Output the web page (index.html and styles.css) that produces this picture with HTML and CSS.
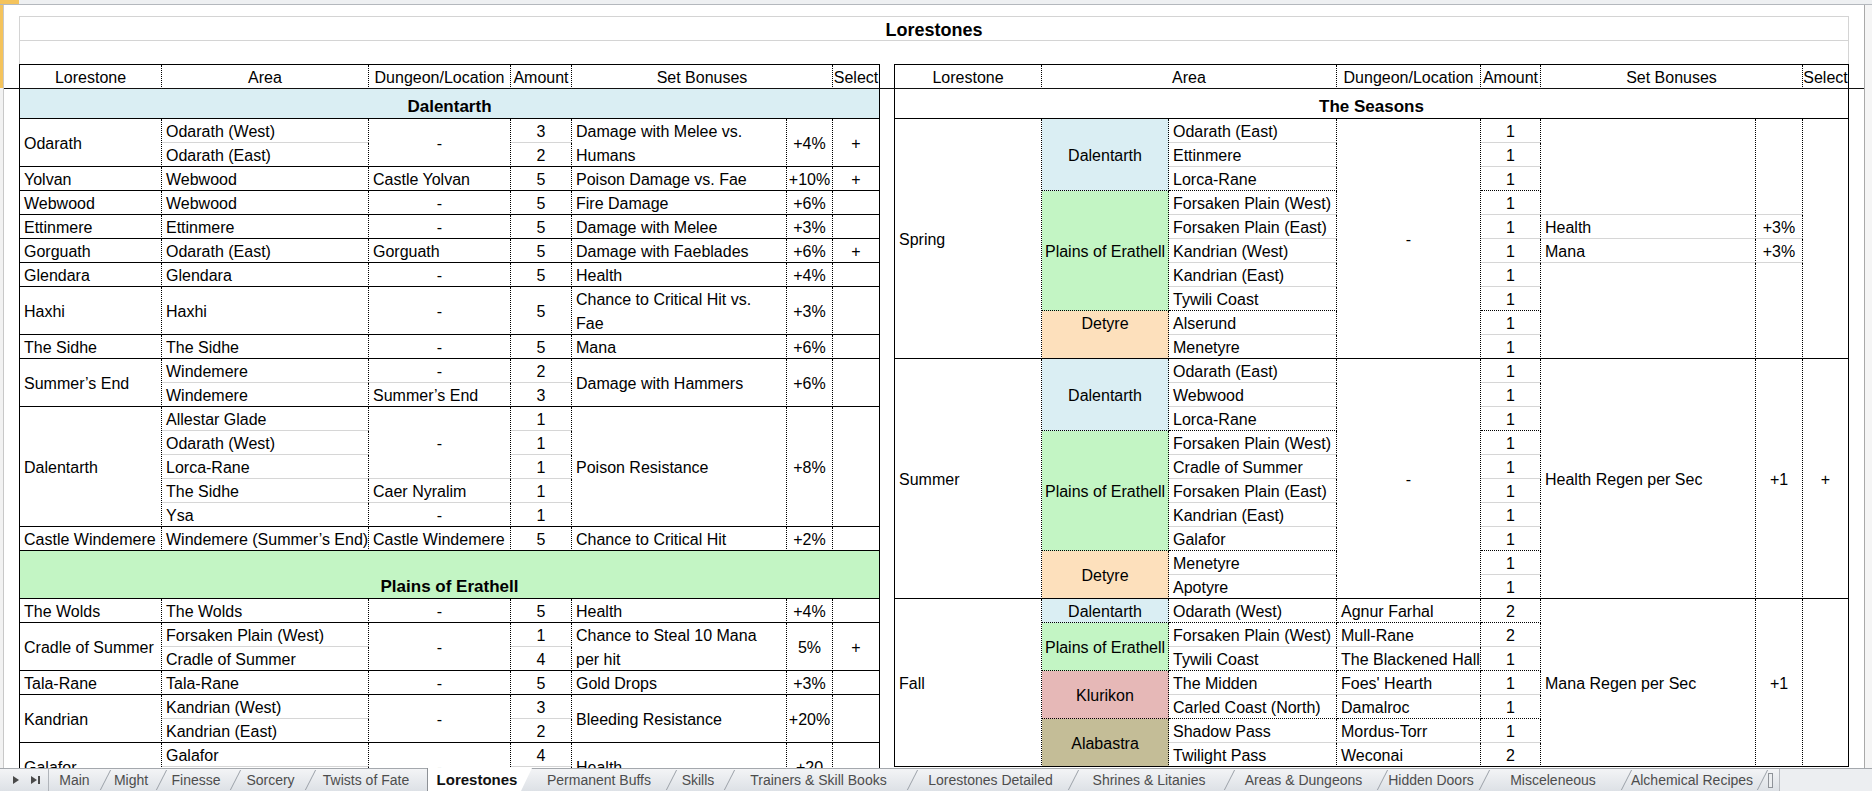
FILE: index.html
```html
<!DOCTYPE html>
<html lang="en">
<head>
<meta charset="utf-8">
<title>Lorestones</title>
<link rel="stylesheet" href="styles.css">
</head>
<body>
<div class="app">
  <div class="colhead"><div class="sel"></div></div>
  <div class="main">
    <div class="gutter"><div class="sel"></div></div>
    <div class="sheet">
      <div class="freeze"></div>
      <div class="titleblock">
        <div class="title">Lorestones</div>
        <div class="blank"></div>
      </div>
      <div class="tables">
        <!-- LEFT TABLE -->
        <div class="tbl tl">
          <div class="grid head">
            <div class="c ctr">Lorestone</div>
            <div class="c ctr">Area</div>
            <div class="c ctr">Dungeon/Location</div>
            <div class="c ctr">Amount</div>
            <div class="c ctr s2">Set Bonuses</div>
            <div class="c ctr e">Select</div>
          </div>
          <div class="sec blue">Dalentarth</div>
          <div class="grid">
            <div class="c r2">Odarath</div>
            <div class="c bg">Odarath (West)</div>
            <div class="c r2 ctr">-</div>
            <div class="c bg ctr">3</div>
            <div class="c r2 wrap"><span>Damage with Melee vs.<br>Humans</span></div>
            <div class="c r2 ctr">+4%</div>
            <div class="c r2 ctr e">+</div>
            <div class="c">Odarath (East)</div>
            <div class="c ctr">2</div>

            <div class="c">Yolvan</div>
            <div class="c">Webwood</div>
            <div class="c">Castle Yolvan</div>
            <div class="c ctr">5</div>
            <div class="c">Poison Damage vs. Fae</div>
            <div class="c ctr">+10%</div>
            <div class="c ctr e">+</div>

            <div class="c">Webwood</div>
            <div class="c">Webwood</div>
            <div class="c ctr">-</div>
            <div class="c ctr">5</div>
            <div class="c">Fire Damage</div>
            <div class="c ctr">+6%</div>
            <div class="c e"></div>

            <div class="c">Ettinmere</div>
            <div class="c">Ettinmere</div>
            <div class="c ctr">-</div>
            <div class="c ctr">5</div>
            <div class="c">Damage with Melee</div>
            <div class="c ctr">+3%</div>
            <div class="c e"></div>

            <div class="c">Gorguath</div>
            <div class="c">Odarath (East)</div>
            <div class="c">Gorguath</div>
            <div class="c ctr">5</div>
            <div class="c">Damage with Faeblades</div>
            <div class="c ctr">+6%</div>
            <div class="c ctr e">+</div>

            <div class="c">Glendara</div>
            <div class="c">Glendara</div>
            <div class="c ctr">-</div>
            <div class="c ctr">5</div>
            <div class="c">Health</div>
            <div class="c ctr">+4%</div>
            <div class="c e"></div>

            <div class="c r2">Haxhi</div>
            <div class="c r2">Haxhi</div>
            <div class="c r2 ctr">-</div>
            <div class="c r2 ctr">5</div>
            <div class="c r2 wrap"><span>Chance to Critical Hit vs.<br>Fae</span></div>
            <div class="c r2 ctr">+3%</div>
            <div class="c r2 e"></div>

            <div class="c">The Sidhe</div>
            <div class="c">The Sidhe</div>
            <div class="c ctr">-</div>
            <div class="c ctr">5</div>
            <div class="c">Mana</div>
            <div class="c ctr">+6%</div>
            <div class="c e"></div>

            <div class="c r2">Summer’s End</div>
            <div class="c bg">Windemere</div>
            <div class="c bg ctr">-</div>
            <div class="c bg ctr">2</div>
            <div class="c r2">Damage with Hammers</div>
            <div class="c r2 ctr">+6%</div>
            <div class="c r2 e"></div>
            <div class="c">Windemere</div>
            <div class="c">Summer’s End</div>
            <div class="c ctr">3</div>

            <div class="c r5">Dalentarth</div>
            <div class="c bg">Allestar Glade</div>
            <div class="c r3 bg ctr">-</div>
            <div class="c bg ctr">1</div>
            <div class="c r5">Poison Resistance</div>
            <div class="c r5 ctr">+8%</div>
            <div class="c r5 e"></div>
            <div class="c bg">Odarath (West)</div>
            <div class="c bg ctr">1</div>
            <div class="c bg">Lorca-Rane</div>
            <div class="c bg ctr">1</div>
            <div class="c bg">The Sidhe</div>
            <div class="c bg">Caer Nyralim</div>
            <div class="c bg ctr">1</div>
            <div class="c">Ysa</div>
            <div class="c ctr">-</div>
            <div class="c ctr">1</div>

            <div class="c">Castle Windemere</div>
            <div class="c">Windemere (Summer’s End)</div>
            <div class="c">Castle Windemere</div>
            <div class="c ctr">5</div>
            <div class="c">Chance to Critical Hit</div>
            <div class="c ctr">+2%</div>
            <div class="c e"></div>
          </div>
          <div class="sec green tall">Plains of Erathell</div>
          <div class="grid">
            <div class="c">The Wolds</div>
            <div class="c">The Wolds</div>
            <div class="c ctr">-</div>
            <div class="c ctr">5</div>
            <div class="c">Health</div>
            <div class="c ctr">+4%</div>
            <div class="c e"></div>

            <div class="c r2">Cradle of Summer</div>
            <div class="c bg">Forsaken Plain (West)</div>
            <div class="c r2 ctr">-</div>
            <div class="c bg ctr">1</div>
            <div class="c r2 wrap"><span>Chance to Steal 10 Mana<br>per hit</span></div>
            <div class="c r2 ctr">5%</div>
            <div class="c r2 ctr e">+</div>
            <div class="c">Cradle of Summer</div>
            <div class="c ctr">4</div>

            <div class="c">Tala-Rane</div>
            <div class="c">Tala-Rane</div>
            <div class="c ctr">-</div>
            <div class="c ctr">5</div>
            <div class="c">Gold Drops</div>
            <div class="c ctr">+3%</div>
            <div class="c e"></div>

            <div class="c r2">Kandrian</div>
            <div class="c bg">Kandrian (West)</div>
            <div class="c r2 ctr">-</div>
            <div class="c bg ctr">3</div>
            <div class="c r2">Bleeding Resistance</div>
            <div class="c r2 ctr">+20%</div>
            <div class="c r2 e"></div>
            <div class="c">Kandrian (East)</div>
            <div class="c ctr">2</div>

            <div class="c r2">Galafor</div>
            <div class="c bg">Galafor</div>
            <div class="c r2 ctr">-</div>
            <div class="c bg ctr">4</div>
            <div class="c r2">Health</div>
            <div class="c r2 ctr">+20</div>
            <div class="c r2 e"></div>
            <div class="c"></div>
            <div class="c"></div>
          </div>
        </div>

        <!-- RIGHT TABLE -->
        <div class="tbl tr">
          <div class="grid head">
            <div class="c ctr">Lorestone</div>
            <div class="c ctr s2">Area</div>
            <div class="c ctr">Dungeon/Location</div>
            <div class="c ctr">Amount</div>
            <div class="c ctr s2">Set Bonuses</div>
            <div class="c ctr e">Select</div>
          </div>
          <div class="sec">The Seasons</div>
          <div class="grid">
            <!-- Spring -->
            <div class="c r10">Spring</div>
            <div class="c r3 bd blue ctr">Dalentarth</div>
            <div class="c bg">Odarath (East)</div>
            <div class="c r10 ctr">-</div>
            <div class="c bg ctr">1</div>
            <div class="c r4 bg"></div>
            <div class="c r4 bg"></div>
            <div class="c r10 e"></div>
            <div class="c bg">Ettinmere</div>
            <div class="c bg ctr">1</div>
            <div class="c bd">Lorca-Rane</div>
            <div class="c bd ctr">1</div>
            <div class="c r5 bd green ctr">Plains of Erathell</div>
            <div class="c bg">Forsaken Plain (West)</div>
            <div class="c bg ctr">1</div>
            <div class="c bg">Forsaken Plain (East)</div>
            <div class="c bg ctr">1</div>
            <div class="c bg">Health</div>
            <div class="c bg ctr">+3%</div>
            <div class="c bg">Kandrian (West)</div>
            <div class="c bg ctr">1</div>
            <div class="c bg">Mana</div>
            <div class="c bg ctr">+3%</div>
            <div class="c bg">Kandrian (East)</div>
            <div class="c bg ctr">1</div>
            <div class="c r4"></div>
            <div class="c r4"></div>
            <div class="c bd">Tywili Coast</div>
            <div class="c bd ctr">1</div>
            <div class="c r2 peach ctr top">Detyre</div>
            <div class="c bg">Alserund</div>
            <div class="c bg ctr">1</div>
            <div class="c">Menetyre</div>
            <div class="c ctr">1</div>

            <!-- Summer -->
            <div class="c r10">Summer</div>
            <div class="c r3 bd blue ctr">Dalentarth</div>
            <div class="c bg">Odarath (East)</div>
            <div class="c r10 ctr">-</div>
            <div class="c bg ctr">1</div>
            <div class="c r10">Health Regen per Sec</div>
            <div class="c r10 ctr">+1</div>
            <div class="c r10 ctr e">+</div>
            <div class="c bg">Webwood</div>
            <div class="c bg ctr">1</div>
            <div class="c bd">Lorca-Rane</div>
            <div class="c bd ctr">1</div>
            <div class="c r5 bd green ctr">Plains of Erathell</div>
            <div class="c bg">Forsaken Plain (West)</div>
            <div class="c bg ctr">1</div>
            <div class="c bg">Cradle of Summer</div>
            <div class="c bg ctr">1</div>
            <div class="c bg">Forsaken Plain (East)</div>
            <div class="c bg ctr">1</div>
            <div class="c bg">Kandrian (East)</div>
            <div class="c bg ctr">1</div>
            <div class="c bd">Galafor</div>
            <div class="c bd ctr">1</div>
            <div class="c r2 peach ctr">Detyre</div>
            <div class="c bg">Menetyre</div>
            <div class="c bg ctr">1</div>
            <div class="c">Apotyre</div>
            <div class="c ctr">1</div>

            <!-- Fall -->
            <div class="c r7">Fall</div>
            <div class="c bd blue ctr">Dalentarth</div>
            <div class="c bd">Odarath (West)</div>
            <div class="c bd">Agnur Farhal</div>
            <div class="c bd ctr">2</div>
            <div class="c r7">Mana Regen per Sec</div>
            <div class="c r7 ctr">+1</div>
            <div class="c r7 e"></div>
            <div class="c r2 bd green ctr">Plains of Erathell</div>
            <div class="c bg">Forsaken Plain (West)</div>
            <div class="c bg">Mull-Rane</div>
            <div class="c bg ctr">2</div>
            <div class="c bd">Tywili Coast</div>
            <div class="c bd">The Blackened Hall</div>
            <div class="c bd ctr">1</div>
            <div class="c r2 bd pink ctr">Klurikon</div>
            <div class="c bg">The Midden</div>
            <div class="c bg">Foes' Hearth</div>
            <div class="c bg ctr">1</div>
            <div class="c bd">Carled Coast (North)</div>
            <div class="c bd">Damalroc</div>
            <div class="c bd ctr">1</div>
            <div class="c r2 tan ctr">Alabastra</div>
            <div class="c bg">Shadow Pass</div>
            <div class="c bg">Mordus-Torr</div>
            <div class="c bg ctr">1</div>
            <div class="c">Twilight Pass</div>
            <div class="c">Weconai</div>
            <div class="c ctr">2</div>
          </div>
        </div>
      </div>
    </div>
    <div class="vscroll"></div>
  </div>
  <div class="tabbar">
    <div class="tnav"><span class="arr"></span><span class="arr end"></span></div>
    <div class="tab">Main</div>
    <div class="tab">Might</div>
    <div class="tab">Finesse</div>
    <div class="tab">Sorcery</div>
    <div class="tab pre">Twists of Fate</div>
    <div class="tab act">Lorestones</div>
    <div class="tab">Permanent Buffs</div>
    <div class="tab">Skills</div>
    <div class="tab">Trainers &amp; Skill Books</div>
    <div class="tab">Lorestones Detailed</div>
    <div class="tab">Shrines &amp; Litanies</div>
    <div class="tab">Areas &amp; Dungeons</div>
    <div class="tab">Hidden Doors</div>
    <div class="tab">Misceleneous</div>
    <div class="tab">Alchemical Recipes</div>
    <div class="tend"><div class="split"></div><div class="hs"></div></div>
  </div>
</div>
</body>
</html>
```

FILE: styles.css
```css
* { box-sizing: border-box; }
html, body { margin: 0; padding: 0; }
body {
  width: 1872px;
  height: 791px;
  overflow: hidden;
  background: #fff;
  color: #000;
  font-family: "Liberation Sans", Arial, sans-serif;
}
.app { display: flex; flex-direction: column; width: 1872px; height: 791px; }

/* column header remnant */
.colhead {
  flex: none;
  height: 5px;
  display: flex;
  background: #eef0f2;
  border-bottom: 1px solid #b4b8bd;
}
.colhead .sel { width: 19px; background: #f4c35c; }

.main { flex: 1; display: flex; min-height: 0; overflow: hidden; }
.gutter { flex: none; width: 4px; background: #f2f2f2; border-right: 1px solid #c8c8c8; }
.gutter .sel { height: 83px; background: #f4c35c; }
.vscroll { flex: none; width: 8px; background: #f5f5f5; border-left: 1px solid #a9a9a9; }

.sheet {
  flex: 1;
  min-width: 0;
  position: relative;
  overflow: hidden;
  padding: 11px 0 0 15px;
}
.freeze {
  position: absolute;
  left: 0;
  right: 0;
  top: 83px;
  height: 1px;
  background: #111;
  z-index: 2;
}

/* title rows */
.titleblock {
  width: 1830px;
  border: 1px solid #d4d4d4;
  border-bottom: 0;
}
.title {
  height: 24px;
  border-bottom: 1px solid #d4d4d4;
  display: flex;
  justify-content: center;
  align-items: center;
  padding-top: 2px;
  font-size: 18px;
  line-height: 20px;
  font-weight: bold;
}
.blank { height: 23px; }

/* tables */
.tables { display: flex; gap: 14px; align-items: flex-start; }
.tbl { border: 1px solid #000; border-bottom: 0; }
.tl { width: 861px; }
.tr { width: 955px; }

.grid { display: grid; grid-auto-rows: 24px; }
.tl .grid { grid-template-columns: 142px 207px 142px 61px 215px 46px 46px; }
.tr .grid { grid-template-columns: 147px 127px 168px 144px 60px 215px 47px 45px; }

.c {
  display: flex;
  align-items: center;
  min-width: 0;
  padding: 3px 4px 0;
  border-right: 1px dotted #000;
  border-bottom: 1px solid #000;
  font-size: 16px;
  line-height: 20px;
  white-space: nowrap;
}
.c.e { border-right: 0; }
.c.ctr { justify-content: center; padding-left: 0; padding-right: 0; }
.c.bg { border-bottom-color: #d6d6d6; }
.c.bd { border-bottom-style: dotted; }
.c.wrap { align-items: flex-start; padding-top: 1px; line-height: 24px; }
.c.top { align-items: flex-start; }

.r2 { grid-row: span 2; }
.r3 { grid-row: span 3; }
.r4 { grid-row: span 4; }
.r5 { grid-row: span 5; }
.r7 { grid-row: span 7; }
.r10 { grid-row: span 10; }
.s2 { grid-column: span 2; }

.sec {
  height: 30px;
  display: flex;
  justify-content: center;
  align-items: flex-end;
  padding-bottom: 1px;
  border-bottom: 1px solid #000;
  font-size: 17px;
  line-height: 20px;
  font-weight: bold;
}
.sec.tall { height: 48px; }

.blue { background: #daeef3; }
.green { background: #c3f5c4; }
.peach { background: #fde0bc; }
.pink { background: #e6b8b7; }
.tan { background: #c4bd97; }

/* sheet tabs */
.tabbar {
  flex: none;
  height: 23px;
  display: grid;
  grid-template-columns: 49px 57px 56px 74px 75px 116px 105px 140px 58px 183px 161px 156px 153px 102px 142px 136px 1fr;
  background: linear-gradient(#f3f4f6, #dde1e6);
  border-top: 1px solid #a4a8ad;
  font-size: 14px;
  color: #4d4d4d;
}
.tnav {
  display: flex;
  align-items: center;
  gap: 12px;
  padding-left: 13px;
  border-right: 1px solid #b0b4ba;
}
.arr {
  position: relative;
  width: 0;
  height: 0;
  border-left: 6px solid #4a4a4a;
  border-top: 4px solid transparent;
  border-bottom: 4px solid transparent;
}
.arr.end::after {
  content: "";
  position: absolute;
  left: 1px;
  top: -4px;
  width: 2px;
  height: 8px;
  background: #4a4a4a;
}
.tab {
  position: relative;
  display: flex;
  align-items: center;
  justify-content: center;
  padding-right: 6px;
  white-space: nowrap;
}
.tab::after {
  content: "";
  position: absolute;
  right: 0;
  top: 1px;
  bottom: 1px;
  width: 1px;
  background: #9ba1a8;
  transform: skewX(-27deg);
}
.tab.pre::after { display: none; }
.tab.act {
  margin-top: -1px;
  background: #fff;
  color: #111;
  font-size: 15px;
  font-weight: bold;
  border-left: 1px solid #8d9196;
  clip-path: polygon(0 0, 100% 0, calc(100% - 11px) 100%, 0 100%);
}
.tab.act::after { display: none; }
.tend { display: flex; align-items: center; }
.split {
  width: 5px;
  height: 15px;
  margin-left: 5px;
  border: 1px solid #8f9399;
  background: #eceef0;
}
.hs {
  flex: 1;
  height: 100%;
  margin-left: 6px;
  background: #eceef1;
  border-left: 1px solid #b9bcc1;
}
```
